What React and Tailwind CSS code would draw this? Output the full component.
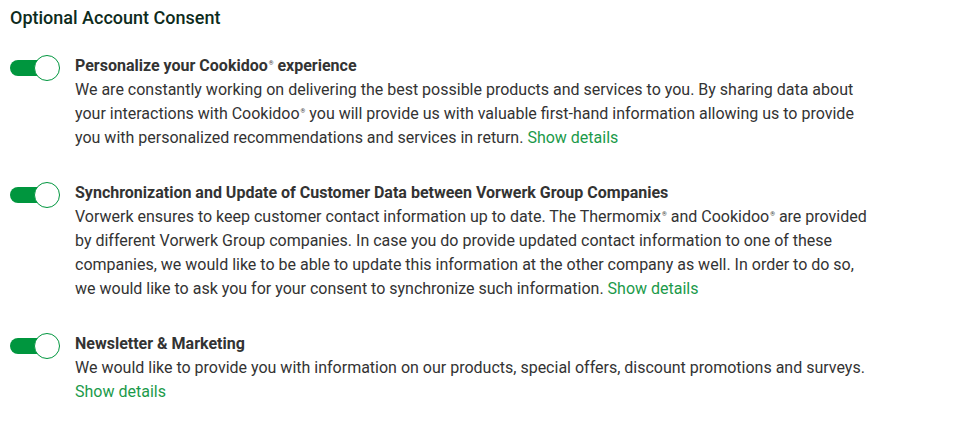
import { useState } from "react";

const Reg = () => <span className="text-[6px] leading-none align-[6px] ml-[1px] font-normal">®</span>;

const ITEMS = [
  {
    title: <>Personalize your Cookidoo<Reg /> experience</>,
    body: (
      <>
        We are constantly working on delivering the best possible products and services to you. By sharing data about your interactions with Cookidoo<Reg /> you will provide us with valuable first-hand information allowing us to provide you with personalized recommendations and services in return.
      </>
    ),
  },
  {
    title: <>Synchronization and Update of Customer Data between Vorwerk Group Companies</>,
    body: (
      <>
        Vorwerk ensures to keep customer contact information up to date. The Thermomix<Reg /> and Cookidoo<Reg /> are provided by different Vorwerk Group companies. In case you do provide updated contact information to one of these companies, we would like to be able to update this information at the other company as well. In order to do so, we would like to ask you for your consent to synchronize such information.
      </>
    ),
  },
  {
    title: <>Newsletter &amp; Marketing</>,
    body: <>We would like to provide you with information on our products, special offers, discount promotions and surveys.</>,
    breakLink: true,
  },
];

function Toggle({ on, onClick }) {
  return (
    <button onClick={onClick} className="flex items-center w-[50px] h-[26px] shrink-0 bg-transparent border-none p-0 cursor-pointer">
      <span className={`w-[40px] h-[16px] rounded-full shrink-0 ${on ? "bg-[#00963e]" : "bg-[#c4c4c4]"}`} />
      <span className={`w-[26px] h-[26px] shrink-0 rounded-full bg-white border ${on ? "-ml-[16px] border-[#00963e]" : "-ml-[40px] border-[#aaa]"}`} />
    </button>
  );
}

export default function App() {
  const [state, setState] = useState([true, true, true]);

  return (
    <div className="w-[962px] h-[439px] bg-white text-[#333] font-['Roboto',sans-serif] pl-[10px] pt-[6px]">
      <h2 className="text-[18px] font-medium text-[#0d2b1c] leading-[24px] m-0">Optional Account Consent</h2>
      <div className="flex flex-col gap-[32px] mt-[25px]">
        {ITEMS.map((it, i) => (
          <div key={i} className="flex gap-[15px] items-start">
            <Toggle on={state[i]} onClick={() => setState(state.map((s, j) => (j === i ? !s : s)))} />
            <div className="w-[800px] text-[16px] leading-[24px] -mt-[1px]">
              <div className="font-bold">{it.title}</div>
              <p className="m-0">
                {it.body}{it.breakLink ? <br /> : " "}
                <a href="#" className="text-[#1b9a4a] no-underline">Show details</a>
              </p>
            </div>
          </div>
        ))}
      </div>
    </div>
  );
}
